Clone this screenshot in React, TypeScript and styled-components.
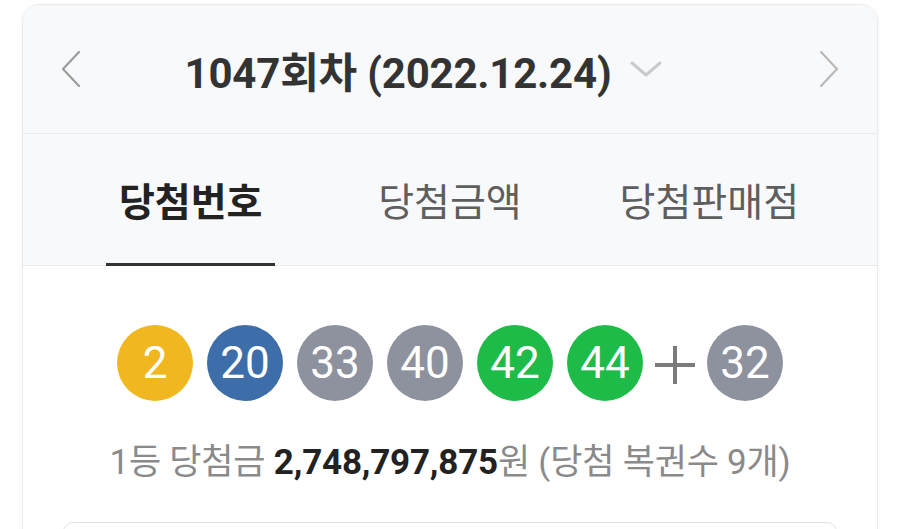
import React from "react";
import styled, { createGlobalStyle } from "styled-components";

type Ball = { num: number; color: string };

const winning: Ball[] = [
  { num: 2, color: "#f1b720" },
  { num: 20, color: "#3e6eaa" },
  { num: 33, color: "#8e919e" },
  { num: 40, color: "#8e919e" },
  { num: 42, color: "#1fbb48" },
  { num: 44, color: "#1fbb48" },
];

const bonus: Ball = { num: 32, color: "#8e919e" };

const tabs = ["당첨번호", "당첨금액", "당첨판매점"];

const Chevron = ({ dir, color }: { dir: "left" | "right"; color: string }) => (
  <svg width="22" height="38" viewBox="0 0 22 38" fill="none">
    <path
      d={dir === "left" ? "M19 2 L3 19 L19 36" : "M3 2 L19 19 L3 36"}
      stroke={color}
      strokeWidth="2.2"
      strokeLinecap="round"
      strokeLinejoin="round"
    />
  </svg>
);

const App = () => {
  return (
    <>
      <GlobalStyle />
      <Page>
        <Card>
          <RoundHeader>
            <ArrowBtn>
              <Chevron dir="left" color="#9c9c9c" />
            </ArrowBtn>
            <TitleWrap>
              <Title>1047회차 (2022.12.24)</Title>
              <svg width="34" height="20" viewBox="0 0 34 20" fill="none">
                <path
                  d="M3 4 L17 16 L31 4"
                  stroke="#c9cacd"
                  strokeWidth="3"
                  strokeLinecap="round"
                  strokeLinejoin="round"
                />
              </svg>
            </TitleWrap>
            <ArrowBtn>
              <Chevron dir="right" color="#b9b9b9" />
            </ArrowBtn>
          </RoundHeader>

          <TabBar>
            {tabs.map((t, i) => (
              <Tab key={t}>
                <TabLabel $active={i === 0}>{t}</TabLabel>
              </Tab>
            ))}
          </TabBar>

          <Body>
            <BallRow>
              {winning.map((b) => (
                <NumBall key={b.num} $color={b.color}>
                  {b.num}
                </NumBall>
              ))}
              <Plus>
                <svg width="40" height="40" viewBox="0 0 40 40">
                  <rect x="0" y="18" width="40" height="4" fill="#7b7b7b" />
                  <rect x="18" y="1" width="4" height="38" fill="#7b7b7b" />
                </svg>
              </Plus>
              <NumBall $color={bonus.color}>{bonus.num}</NumBall>
            </BallRow>

            <Summary>
              1등 당첨금 <strong>2,748,797,875</strong>원 (당첨 복권수 9개)
            </Summary>

            <DetailBox />
          </Body>
        </Card>
      </Page>
    </>
  );
};

export default App;

const GlobalStyle = createGlobalStyle`
  body {
    margin: 0;
    background: #ffffff;
    font-family: Roboto, "Noto Sans CJK KR", sans-serif;
    overflow: hidden;
  }
`;

const Page = styled.div`
  padding: 4px 22px 0;
`;

const Card = styled.div`
  width: 856px;
  box-sizing: border-box;
  border: 1px solid #e9ebee;
  border-radius: 18px;
  overflow: hidden;
  background: #fff;
  box-shadow: 0 1px 4px rgba(0, 0, 0, 0.05);
`;

const RoundHeader = styled.div`
  display: flex;
  align-items: center;
  height: 128px;
  padding: 0 37px;
  background: #f8f9fb;
  border-bottom: 1px solid #e8eaed;
`;

const ArrowBtn = styled.div`
  display: flex;
  align-items: center;
  justify-content: center;
  width: 22px;
`;

const TitleWrap = styled.div`
  flex: 1;
  display: flex;
  align-items: center;
  justify-content: center;
  gap: 18px;
  padding-right: 52px;
`;

const Title = styled.span`
  font-size: 42px;
  font-weight: 700;
  color: #333;
  letter-spacing: -0.2px;
`;

const TabBar = styled.div`
  display: flex;
  height: 131px;
  padding: 0 38px;
  background: #f8f9fb;
  border-bottom: 1px solid #e6e8eb;
`;

const Tab = styled.div`
  flex: 1;
  display: flex;
  justify-content: center;
`;

const TabLabel = styled.div<{ $active: boolean }>`
  display: flex;
  align-items: center;
  padding: 0 13px;
  margin-bottom: -1px;
  font-size: 39px;
  font-weight: ${(p) => (p.$active ? 700 : 400)};
  color: ${(p) => (p.$active ? "#222" : "#5e5e5e")};
  border-bottom: 3px solid ${(p) => (p.$active ? "#333" : "transparent")};
`;

const Body = styled.div`
  padding: 59px 40px 40px;
`;

const BallRow = styled.div`
  display: flex;
  justify-content: center;
  align-items: center;
  gap: 14px;
`;

const NumBall = styled.div<{ $color: string }>`
  width: 76px;
  height: 76px;
  border-radius: 50%;
  background: ${(p) => p.$color};
  color: #fff;
  display: flex;
  align-items: center;
  justify-content: center;
  font-family: Roboto, sans-serif;
  font-size: 44px;
  font-weight: 400;
`;

const Plus = styled.div`
  display: flex;
  width: 40px;
  margin: 4px -2px 0;
`;

const Summary = styled.p`
  margin: 32px 0 0;
  text-align: center;
  font-size: 35px;
  color: #8a8a8a;
  letter-spacing: -0.2px;

  strong {
    color: #222;
    font-weight: 700;
  }
`;

const DetailBox = styled.div`
  margin-top: 38px;
  height: 120px;
  border: 1px solid #dfe1e4;
  border-radius: 10px;
`;
